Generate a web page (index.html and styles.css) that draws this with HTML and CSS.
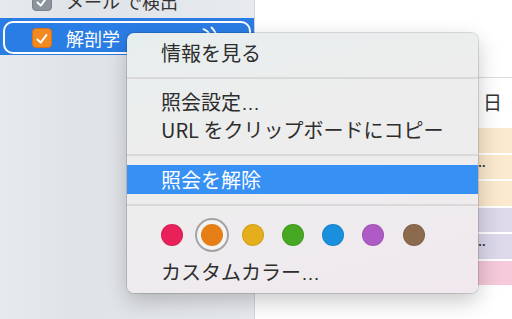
FILE: index.html
```html
<!DOCTYPE html>
<html lang="ja">
<head>
<meta charset="utf-8">
<link rel="stylesheet" href="styles.css">
</head>
<body>
<div class="app">
  <aside class="sidebar">
    <ul class="cal-list">
      <li class="row">
        <div class="pill">
          <span class="chk grey"><svg viewBox="0 0 20 20"><path d="M5 10.5 L8.6 14 L15 5.5" fill="none" stroke="#fff" stroke-width="2.2" stroke-linecap="round" stroke-linejoin="round"/></svg></span>
          <span class="name">メール で検出</span>
        </div>
      </li>
      <li class="row selected">
        <div class="pill">
          <span class="chk orange"><svg viewBox="0 0 20 20"><path d="M5 10.5 L8.6 14 L15 5.5" fill="none" stroke="#fff" stroke-width="2.2" stroke-linecap="round" stroke-linejoin="round"/></svg></span>
          <span class="name">解剖学</span>
          <svg class="sub-icon" viewBox="0 0 24 24"><path d="M6.5 5.2 A11 11 0 0 1 13 11" fill="none" stroke="#fff" stroke-width="1.8" stroke-linecap="round"/><path d="M14.5 3.5 A18 18 0 0 1 18.5 9" fill="none" stroke="#fff" stroke-width="1.8" stroke-linecap="round"/></svg>
        </div>
      </li>
    </ul>
  </aside>
  <main class="calendar">
    <div class="cal-head"></div>
    <div class="day-col">
      <div class="day-label">日</div>
      <div class="ev ev-orange"></div>
      <div class="ev ev-orange"><span class="more">…</span></div>
      <div class="ev ev-orange"></div>
      <div class="ev ev-purple"></div>
      <div class="ev ev-purple"><span class="more">…</span></div>
      <div class="ev ev-pink"></div>
    </div>
  </main>
  <div class="menu">
    <div class="item">情報を見る</div>
    <div class="sep"></div>
    <div class="item">照会設定<span class="ell">…</span></div>
    <div class="item">URL をクリップボードにコピー</div>
    <div class="sep"></div>
    <div class="item active">照会を解除</div>
    <div class="sep"></div>
    <div class="colors">
      <span class="dot red"></span>
      <span class="dot orange sel"></span>
      <span class="dot yellow"></span>
      <span class="dot green"></span>
      <span class="dot blue"></span>
      <span class="dot purple"></span>
      <span class="dot brown"></span>
    </div>
    <div class="item">カスタムカラー<span class="ell">…</span></div>
  </div>
</div>
</body>
</html>
```
FILE: styles.css
```css
* { box-sizing: border-box; }
html, body {
  margin: 0;
  padding: 0;
  width: 512px;
  height: 319px;
  overflow: hidden;
  background: #fff;
  font-family: "Noto Sans CJK JP", "Noto Sans", sans-serif;
  color: #2f2f2f;
}
.app {
  position: relative;
  display: flex;
  width: 512px;
  height: 319px;
  overflow: hidden;
}
.sidebar {
  width: 255px;
  flex: none;
  height: 100%;
  background: linear-gradient(90deg, #e7eaed 0%, #dfe3e7 30%, #e3e6ea 65%, #e8ebee 100%);
  border-right: 1px solid #d3d5d8;
}
.cal-list {
  list-style: none;
  margin: -19px 0 0 0;
  padding: 0;
}
.row {
  height: 37px;
  padding: 3px 3px 1px 3px;
}
.row.selected {
  background: #2b7de6;
}
.pill {
  height: 33px;
  border: 2px solid transparent;
  border-radius: 10px;
  display: flex;
  align-items: center;
  padding-left: 27px;
}
.selected .pill {
  border-color: #fff;
}
.chk {
  width: 20px;
  height: 20px;
  border-radius: 4px;
  display: flex;
  flex: none;
}
.chk svg { width: 20px; height: 20px; }
.chk.grey {
  background: #8e949b;
  border: 1px solid #7b8188;
}
.chk.orange {
  background: #f28a22;
  border: 1px solid #d8701a;
}
.name {
  margin-left: 14px;
  font-size: 18px;
  line-height: 24px;
  color: #333;
}
.selected .name { color: #fff; }
.sub-icon {
  width: 24px;
  height: 24px;
  margin-left: auto;
  margin-right: 28px;
  margin-top: -4px;
}
.calendar {
  flex: 1;
  display: flex;
  flex-direction: column;
  background: #fff;
}
.cal-head {
  height: 78px;
  flex: none;
  border-bottom: 1px solid #dddddd;
}
.day-col {
  margin-left: 145px;
  display: flex;
  flex-direction: column;
}
.day-label {
  height: 50px;
  padding-left: 83px;
  font-size: 19px;
  line-height: 48px;
  color: #333;
}
.ev {
  height: 24.5px;
  margin-bottom: 2px;
  font-family: "Liberation Sans", sans-serif;
  font-size: 12px;
  line-height: 16px;
  color: #333;
  padding-left: 74px;
}
.ev-orange { background: linear-gradient(90deg, #f7e3c6 0%, #fbeacf 100%); }
.ev-purple { background: linear-gradient(90deg, #d8d2e6 0%, #ddd8ea 100%); }
.ev-pink { background: linear-gradient(90deg, #ecbccd 0%, #f7cadb 100%); }
.more { font-weight: bold; }

.menu {
  position: absolute;
  left: 127px;
  top: 33px;
  width: 351px;
  height: 260px;
  padding: 6px 0 7px 0;
  border-radius: 7px;
  background: linear-gradient(165deg, #e7eeee 0%, #ededed 35%, #eeecee 65%, #f0e8ee 100%);
  box-shadow: 0 0 0 1px rgba(0,0,0,0.13), 0 8px 22px rgba(0,0,0,0.22);
  display: flex;
  flex-direction: column;
}
.item {
  height: 28px;
  line-height: 28px;
  padding-left: 34px;
  font-size: 20px;
  color: #2d2d2d;
  white-space: nowrap;
}
.ell {
  font-family: "Liberation Sans", sans-serif;
  font-size: 19px;
}
.item.active {
  height: 29px;
  line-height: 29px;
  background: #3790f4;
  color: #fff;
}
.sep {
  height: 21px;
  display: flex;
  align-items: center;
}
.sep::before {
  content: "";
  display: block;
  width: 100%;
  height: 2px;
  background: #d9d9d9;
}
.colors {
  height: 43px;
  display: flex;
  align-items: flex-start;
  padding: 9px 0 0 34px;
  gap: 18.3px;
}
.dot {
  width: 22px;
  height: 22px;
  border-radius: 50%;
  flex: none;
  box-shadow: inset 0 0 0 1px rgba(0,0,0,0.08);
}
.dot.sel {
  box-shadow: 0 0 0 4px #f3f3f3, 0 0 0 6px #a3a3a3;
}
.red { background: #e8215b; }
.orange { background: #e67e16; }
.yellow { background: #e5ae1d; }
.green { background: #47a823; }
.blue { background: #1a8fdd; }
.purple { background: #af5bc6; }
.brown { background: #8c6a4d; }
```
